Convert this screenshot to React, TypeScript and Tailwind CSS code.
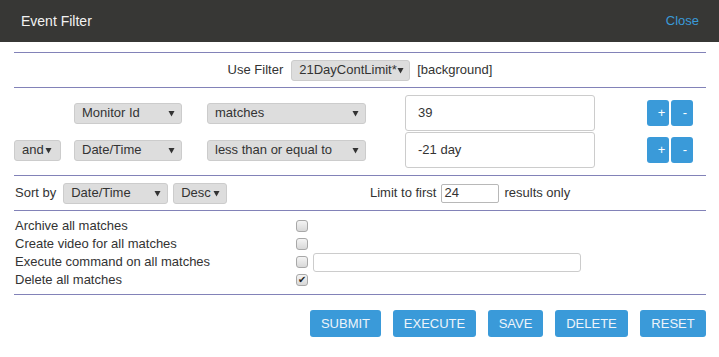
import React from 'react';

const Arrow = () => (
  <svg width="7" height="7" viewBox="0 0 7 7" className="shrink-0">
    <path d="M0.5 1 L6.5 1 L3.5 6.5 Z" fill="#333" />
  </svg>
);

function Select({ label, w, arrowPad = 'pr-[6px]' }: { label: string; w: string; arrowPad?: string }) {
  return (
    <div
      className={`${w} h-[21px] flex items-center justify-between pl-[7px] ${arrowPad} bg-[#dddddd] border border-[#cccccc] rounded-[3px] text-[13px] text-[#333]`}
    >
      <span className="whitespace-nowrap">{label}</span>
      <Arrow />
    </div>
  );
}

function Checkbox({ checked = false }: { checked?: boolean }) {
  return (
    <span className="w-[12px] h-[12px] rounded-[3px] border border-[#a8a8a8] bg-gradient-to-b from-[#f4f4f4] to-[#d8d8d8] flex items-center justify-center text-[10px] leading-none text-[#222]">
      {checked ? '✔' : ''}
    </span>
  );
}

const Rule = () => <div className="h-px bg-[#8282b8]" />;

function FilterRow({ first, field, op, value }: { first?: string; field: string; op: string; value: string }) {
  return (
    <div className="flex items-center h-[36px]">
      <div className="w-[60px]">{first && <Select label={first} w="w-[47px]" arrowPad="pr-[8px]" />}</div>
      <Select label={field} w="w-[108px]" />
      <div className="w-[25px]" />
      <Select label={op} w="w-[159px]" />
      <div className="w-[39px]" />
      <div className="w-[190px] h-[36px] border border-[#cccccc] rounded-[3px] pl-[12px] flex items-center text-[13px] text-[#333]">
        {value}
      </div>
      <div className="w-[52px]" />
      <div className="flex gap-[2px]">
        <button className="w-[22px] h-[26px] bg-[#3a9ad9] rounded-[3px] text-white text-[13px] flex items-center justify-center pl-[7px]">+</button>
        <button className="w-[22px] h-[26px] bg-[#3a9ad9] rounded-[3px] text-white text-[13px] flex items-center justify-center pl-[6px]">-</button>
      </div>
    </div>
  );
}

const actions = [
  { label: 'Archive all matches' },
  { label: 'Create video for all matches' },
  { label: 'Execute command on all matches', input: true },
  { label: 'Delete all matches', checked: true },
];

const buttons = [
  { label: 'SUBMIT', w: 'w-[71px]' },
  { label: 'EXECUTE', w: 'w-[83px]' },
  { label: 'SAVE', w: 'w-[55px]' },
  { label: 'DELETE', w: 'w-[73px]' },
  { label: 'RESET', w: 'w-[66px]' },
];

export default function App() {
  return (
    <div className="w-[719px] h-[357px] bg-white font-['Liberation_Sans',Arial,sans-serif] text-[#333] overflow-hidden">
      {/* HEADER */}
      <div className="h-[42px] bg-[#373735] flex items-center justify-between pl-[21px] pr-[20px]">
        <span className="text-[14px] text-[#f2f2f2]">Event Filter</span>
        <span className="text-[13px] text-[#3a9ad9]">Close</span>
      </div>

      <div className="pl-[14px] pr-[13px] pt-[10px]">
        <Rule />

        {/* USE FILTER */}
        <div className="h-[34px] flex items-center justify-center text-[13px]">
          <span>Use Filter</span>
          <div className="ml-[8px]">
            <Select label="21DayContLimit*" w="w-[119px]" arrowPad="pr-[6px]" />
          </div>
          <span className="ml-[7px]">[background]</span>
        </div>
        <Rule />

        {/* FILTER ROWS */}
        <div className="pt-[7px] pb-[7px] flex flex-col gap-px">
          <FilterRow field="Monitor Id" op="matches" value="39" />
          <FilterRow first="and" field="Date/Time" op="less than or equal to" value="-21 day" />
        </div>
        <Rule />

        {/* SORT */}
        <div className="h-[34px] flex items-center text-[13px]">
          <div className="w-[356px] flex items-center">
            <span className="pl-px">Sort by</span>
            <div className="ml-[7px]">
              <Select label="Date/Time" w="w-[105px]" />
            </div>
            <div className="ml-[5px]">
              <Select label="Desc" w="w-[54px]" />
            </div>
          </div>
          <span>Limit to first</span>
          <div className="ml-[5px] w-[58px] h-[19px] border border-[#b8b8b8] rounded-[2px] pl-[2px] flex items-center">24</div>
          <span className="ml-[5px]">results only</span>
        </div>
        <Rule />

        {/* ACTIONS */}
        <div className="pt-[6px] pb-[5px] text-[13px]">
          {actions.map((a) => (
            <div key={a.label} className="h-[18px] flex items-center">
              <span className="w-[282px] pl-px">{a.label}</span>
              <Checkbox checked={a.checked} />
              {a.input && <div className="ml-[5px] w-[268px] h-[19px] border border-[#cccccc] rounded-[3px]" />}
            </div>
          ))}
        </div>
        <Rule />

        {/* BUTTONS */}
        <div className="pt-[15px] flex justify-end gap-[12px]">
          {buttons.map((b) => (
            <button
              key={b.label}
              className={`${b.w} h-[27px] bg-[#3a9ad9] rounded-[3px] text-[13px] text-[#eef4fa] flex items-center justify-center`}
            >
              {b.label}
            </button>
          ))}
        </div>
      </div>
    </div>
  );
}
